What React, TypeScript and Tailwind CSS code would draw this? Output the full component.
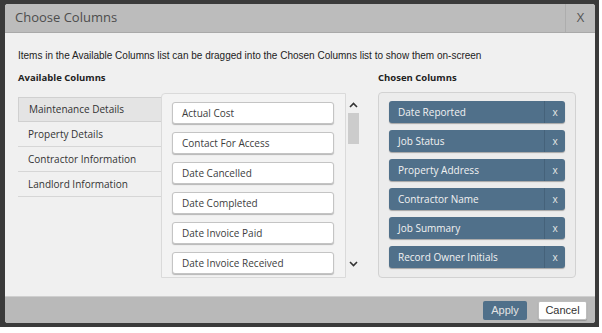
const available = [
  "Actual Cost",
  "Contact For Access",
  "Date Cancelled",
  "Date Completed",
  "Date Invoice Paid",
  "Date Invoice Received",
];

const chosen = [
  "Date Reported",
  "Job Status",
  "Property Address",
  "Contractor Name",
  "Job Summary",
  "Record Owner Initials",
];

const tabs = ["Maintenance Details", "Property Details", "Contractor Information", "Landlord Information"];

const sans = { fontFamily: "'Open Sans', 'Noto Sans', sans-serif" };
const arial = { fontFamily: "'Liberation Sans', Arial, sans-serif" };

export default function App() {
  return (
    <div className="w-[602px] h-[333px] bg-white overflow-hidden">
      <div className="w-[599px] h-[327px] bg-[#3a3a3a] pl-[5px] pt-[4px] pr-[4px] pb-[4px]">
        <div className="w-[590px] h-[319px] flex flex-col bg-[#f0f0f0] rounded-[3px] overflow-hidden">
          {/* Title bar */}
          <div className="h-[29px] shrink-0 flex items-stretch bg-[#bcbcbc] border-b border-[#a9a9a9]">
            <div className="flex-1 flex items-center pl-[10px] text-[13px] text-[#4d4d4d]" style={sans}>
              Choose Columns
            </div>
            <div className="w-[30px] flex items-center justify-center border-l border-[#adadad] text-[13px] text-[#555]" style={sans}>
              X
            </div>
          </div>

          {/* Body */}
          <div className="flex-1 flex flex-col px-[13px]">
            <p className="mt-[15px] text-[10px] text-[#222]" style={arial}>
              Items in the Available Columns list can be dragged into the Chosen Columns list to show them on-screen
            </p>

            <div className="flex mt-[8px]">
              {/* Available */}
              <div className="w-[360px] flex flex-col">
                <div className="text-[9.5px] font-bold text-[#222] h-[21px]" style={sans}>
                  Available Columns
                </div>
                <div className="flex mt-[1px]">
                  <div className="w-[143px] pt-[4px] shrink-0">
                    {tabs.map((t, i) => (
                      <div
                        key={t}
                        className={
                          i === 0
                            ? "h-[25px] flex items-center pl-[10px] text-[10px] text-[#333] bg-[#e4e4e4] border border-r-0 border-[#d0d0d0]"
                            : "h-[25px] flex items-center pl-[10px] text-[10px] text-[#333] border-b border-[#d6d6d6]"
                        }
                        style={sans}
                      >
                        {t}
                      </div>
                    ))}
                  </div>
                  <div className="w-[185px] h-[185px] shrink-0 bg-[#f3f3f3] border border-[#dadada] rounded-tl-[4px] flex flex-col gap-[8px] pl-[10px] pt-[8px]">
                    {available.map((a) => (
                      <div
                        key={a}
                        className="w-[162px] h-[22px] shrink-0 flex items-center pl-[9px] bg-white border border-[#c4c4c4] rounded-[3px] shadow-[0_1px_1px_rgba(0,0,0,0.25)] text-[10px] text-[#3d3d3d]"
                        style={sans}
                      >
                        {a}
                      </div>
                    ))}
                  </div>
                  <div className="w-[13px] ml-[1px] flex flex-col items-center pt-[9px]">
                    <svg width="9" height="6" viewBox="0 0 9 6" className="mb-[5px]">
                      <path d="M1 5 L4.5 1.5 L8 5" fill="none" stroke="#333" strokeWidth="1.6" />
                    </svg>
                    <div className="w-[11px] h-[31px] bg-[#cccccc]" />
                    <div className="flex-1" />
                    <svg width="9" height="6" viewBox="0 0 9 6" className="mb-[11px]">
                      <path d="M1 1 L4.5 4.5 L8 1" fill="none" stroke="#333" strokeWidth="1.6" />
                    </svg>
                  </div>
                </div>
              </div>

              {/* Chosen */}
              <div className="flex flex-col">
                <div className="text-[9.5px] font-bold text-[#222] h-[21px]" style={sans}>
                  Chosen Columns
                </div>
                <div className="w-[198px] h-[186px] border border-[#d2d2d2] rounded-[4px] bg-[#ececec] flex flex-col gap-[7px] pl-[10px] pt-[8px]">
                  {chosen.map((c) => (
                    <div
                      key={c}
                      className="w-[176px] h-[22px] shrink-0 flex items-stretch bg-[#50708a] rounded-[3px] shadow-[0_1px_1px_rgba(0,0,0,0.3)] text-[10px] text-[#f2f2f2]"
                      style={sans}
                    >
                      <div className="flex-1 flex items-center pl-[9px]">{c}</div>
                      <div className="w-[21px] flex items-center justify-center border-l border-[#45627a] text-[10px] text-[#e6e6e6]">
                        x
                      </div>
                    </div>
                  ))}
                </div>
              </div>
            </div>
          </div>

          {/* Footer */}
          <div className="h-[27px] shrink-0 bg-[#b9b9b9] border-t border-[#cfcfcf] flex items-center justify-end gap-[11px] pr-[8px]">
            <button
              className="w-[44px] h-[19px] bg-[#50708a] rounded-[2px] text-[11px] text-[#e4e4e4] flex items-center justify-center"
              style={arial}
            >
              Apply
            </button>
            <button
              className="w-[49px] h-[19px] bg-white border border-[#bdbdbd] rounded-[2px] shadow-[0_1px_1px_rgba(0,0,0,0.2)] text-[11px] text-[#333] flex items-center justify-center"
              style={arial}
            >
              Cancel
            </button>
          </div>
        </div>
      </div>
    </div>
  );
}
